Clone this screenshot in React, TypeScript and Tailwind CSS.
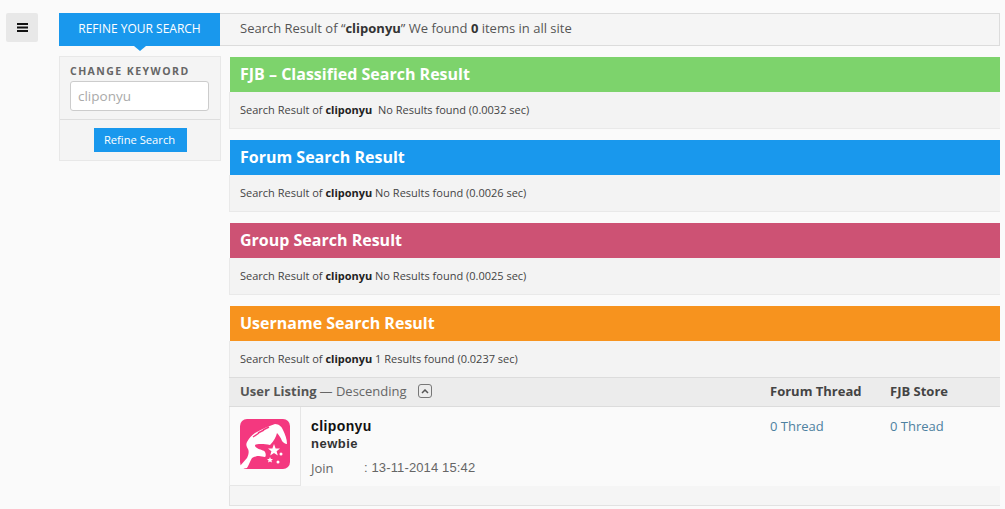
import React from 'react';

const FONT = "font-['Open_Sans','Noto_Sans',sans-serif]";

interface ResultCardProps {
  title: string;
  color: string;
  children: React.ReactNode;
}

// colored heading + gray summary line
const ResultCard = ({ title, color, children }: ResultCardProps) => {
  return (
    <section className="mb-[11px]">
      <h2 className={`ml-px h-[35px] pl-[10px] text-[16px] leading-[34px] font-bold text-white ${color}`}>{title}</h2>
      <div className="h-[37px] border-b border-l border-[#e9e9e9] bg-[#f3f3f3] pl-[10px] text-[11px] leading-[36px] text-[#444]">
        {children}
      </div>
    </section>
  );
};

const Logo = () => (
  <svg viewBox="0 0 50 50" className="h-[50px] w-[50px]">
    <rect width="50" height="50" rx="7" fill="#f4387f" />
    <path
      d="M0 47 L7 39 C9 35 9 32 8 30 C6 27 6 25 7 23 C9 19 12 16 15 14 C22 10 29 7 35 5 C39 5 42 8 43 11 C45 15 47 20 47 25 C45 25 43 23 42 22 C41 19 39 16 37 14 C36 18 34 22 30 26 C27 25 24 25 21 25 C18 25 16 25 15 26 C15 28 16 28 17 29 C20 31 24 31 25 33 C26 35 26 37 25 38 C23 38 21 37 19 37 C16 37 14 38 12 39 C10 42 9 46 7 49 L0 49 Z"
      fill="#fff"
    />
    <path d="M13 18 L19 14 M18 14 L24 11 M23 11 L29 8" stroke="#f4387f" strokeWidth="1.4" />
    <polygon points="34,25 35.6,29.4 40,29.4 36.6,32.2 37.8,36.6 34,34 30.2,36.6 31.4,32.2 28,29.4 32.4,29.4" fill="#fff" />
    <circle cx="41" cy="35" r="1.5" fill="#fff" />
    <polygon points="30,38 30.9,40 33,40 31.4,41.4 32,43.6 30,42.4 28,43.6 28.6,41.4 27,40 29.1,40" fill="#fff" />
    <circle cx="38" cy="43" r="1.5" fill="#fff" />
  </svg>
);

export default function App() {
  return (
    <div className={`${FONT} flex h-[509px] w-[1005px] overflow-hidden bg-[#fafafa] pt-[13px] pl-[6px] text-[#555]`}>
      <button className="flex h-[29px] w-[32px] shrink-0 items-center justify-center rounded-[2px] bg-[#e8e8e8] pb-[1px]">
        <svg viewBox="0 0 11 9" className="h-[9px] w-[11px]">
          <path d="M0 1H11M0 4.5H11M0 8H11" stroke="#111" strokeWidth="2" />
        </svg>
      </button>

      <main className="ml-[21px] w-[941px] shrink-0">
        <div className="flex h-[33px] border border-l-0 border-[#dcdcdc] bg-[#f5f5f5]">
          <div className="relative -mt-px -mb-px flex h-[33px] w-[161px] items-center justify-center bg-[#1998ed] pb-[2px] text-[12px] text-white">
            REFINE YOUR SEARCH
            <span className="absolute top-full left-[75px] border-x-[6px] border-t-[5px] border-x-transparent border-t-[#1998ed]" />
          </div>
          <p className="pl-[20px] text-[13px] leading-[28px] text-[#555]">
            Search Result of “<b className="text-[#333]">cliponyu</b>” We found <b className="text-[#333]">0</b> items in all site
          </p>
        </div>

        <div className="mt-[10px] flex">
          <aside className="h-[105px] w-[162px] shrink-0 border border-[#e8e8e8] bg-[#f4f4f4]">
            <div className="h-[63px] border-b border-[#dedede] px-[10px] pt-[7px]">
              <h3 className="text-[10.5px] leading-[14px] font-bold tracking-[1.45px] text-[#666]">CHANGE KEYWORD</h3>
              <input
                readOnly
                value="cliponyu"
                className="mt-[3px] h-[30px] w-[139px] rounded-[3px] border border-[#ccc] bg-white px-[7px] text-[13.5px] text-[#aaa] outline-none"
              />
            </div>
            <div className="flex justify-center pt-[8px]">
              <button className="h-[24px] w-[93px] bg-[#1998ed] pr-px text-[11.2px] text-white">Refine Search</button>
            </div>
          </aside>

          <div className="ml-[8px] w-[771px] shrink-0 pt-px">
            <ResultCard title="FJB – Classified Search Result" color="bg-[#7dd36c]">
              Search Result of <b className="text-[#222]">cliponyu</b>&nbsp; No Results found (0.0032 sec)
            </ResultCard>
            <ResultCard title="Forum Search Result" color="bg-[#1998ed]">
              Search Result of <b className="text-[#222]">cliponyu</b> No Results found (0.0026 sec)
            </ResultCard>
            <ResultCard title="Group Search Result" color="bg-[#cd5274]">
              Search Result of <b className="text-[#222]">cliponyu</b> No Results found (0.0025 sec)
            </ResultCard>

            <section>
              <h2 className="ml-px h-[35px] bg-[#f7931e] pl-[10px] text-[16px] leading-[34px] font-bold text-white">Username Search Result</h2>
              <div className="h-[36px] border-l border-[#e9e9e9] bg-[#f3f3f3] pl-[10px] text-[11px] leading-[36px] text-[#444]">
                Search Result of <b className="text-[#222]">cliponyu</b> 1 Results found (0.0237 sec)
              </div>
              <div className="flex h-[30px] items-center border-y border-[#dcdcdc] bg-[#ececec] pl-[11px] text-[13px]">
                <div className="flex w-[530px] items-center">
                  <b className="text-[#555]">User Listing</b>
                  <span className="ml-[3px] text-[#666]">— Descending</span>
                  <span className="-mt-[2px] ml-[11px] flex h-[14px] w-[14px] items-center justify-center rounded-[3px] border border-[#777]">
                    <svg viewBox="0 0 8 5" className="h-[5px] w-[8px]">
                      <path d="M1 4L4 1L7 4" fill="none" stroke="#555" strokeWidth="1.5" />
                    </svg>
                  </span>
                </div>
                <b className="w-[120px] text-[#444]">Forum Thread</b>
                <b className="text-[#444]">FJB Store</b>
              </div>
              <div className="flex h-[79px] border-l border-[#e9e9e9] bg-[#fafafa]">
                <div className="h-[79px] w-[71px] border-r border-b border-[#e6e6e6] pt-[12px] pl-[10px]">
                  <Logo />
                </div>
                <div className="w-[469px] pt-[10px] pl-[10px]">
                  <div className="font-['Liberation_Sans',Arial,sans-serif] text-[14px] leading-[18px] font-bold tracking-[0.4px] text-[#111]">cliponyu</div>
                  <div className="font-['Liberation_Sans',Arial,sans-serif] text-[13px] leading-[18px] font-bold tracking-[0.5px] text-[#333]">newbie</div>
                  <div className="mt-[6px] flex text-[13px] leading-[18px] text-[#666]">
                    <span className="w-[53px]">Join</span>
                    <span className="font-['Liberation_Sans',Arial,sans-serif] tracking-[0.13px]">: 13-11-2014 15:42</span>
                  </div>
                </div>
                <a className="w-[120px] pt-[10px] text-[13px] leading-[18px] text-[#4e81a0]">0 Thread</a>
                <a className="pt-[10px] text-[13px] leading-[18px] text-[#4e81a0]">0 Thread</a>
              </div>
              <div className="h-[20px] border-b border-l border-[#e2e2e2] bg-[#f5f5f5]" />
            </section>
          </div>
        </div>
      </main>
    </div>
  );
}
